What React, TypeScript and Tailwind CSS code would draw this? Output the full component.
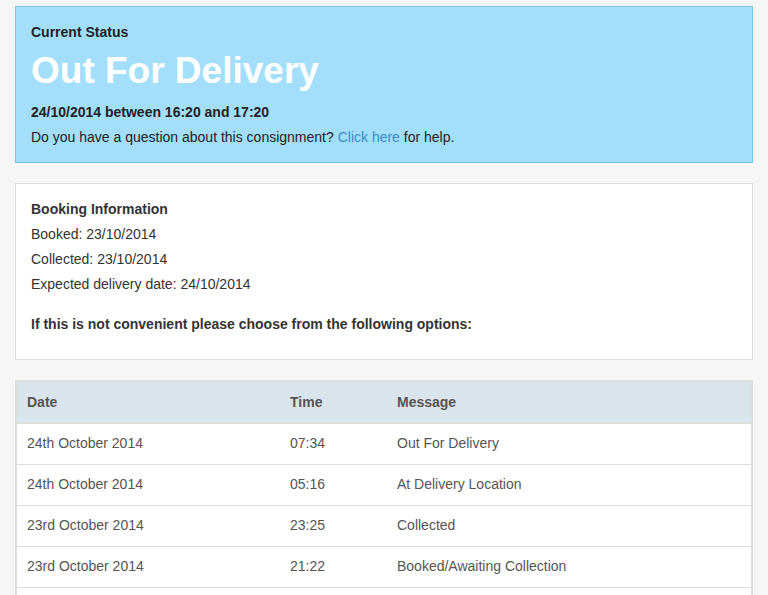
/**
 * Consignment tracking page
 * Current status banner, booking details and the tracking history table
 */

const history = [
  { date: '24th October 2014', time: '07:34', message: 'Out For Delivery' },
  { date: '24th October 2014', time: '05:16', message: 'At Delivery Location' },
  { date: '23rd October 2014', time: '23:25', message: 'Collected' },
  { date: '23rd October 2014', time: '21:22', message: 'Booked/Awaiting Collection' },
]

export default function App() {
  return (
    <div
      className="min-h-screen bg-[#f6f6f6] pl-[15px] pr-[15px] pt-[6px] text-[14px] text-[#333]"
      style={{ fontFamily: '"Liberation Sans", Arial, sans-serif' }}
    >
      <div className="w-[738px]">
        <div className="border border-[#7fc3e0] bg-[#a3dffa] pl-[15px] pr-4 pt-[15px] pb-[15px] text-[#222]">
          <p className="text-[14px] font-bold leading-[20px]">Current Status</p>
          <h1 className="mt-[9px] text-[37px] font-bold leading-[40px] text-white">Out For Delivery</h1>
          <p className="mt-[11px] text-[14px] font-bold leading-[20px]">24/10/2014 between 16:20 and 17:20</p>
          <p className="mt-[5px] text-[14px] leading-[20px]">
            Do you have a question about this consignment?{' '}
            <a href="#" className="text-[#3d8cc9]">
              Click here
            </a>{' '}
            for help.
          </p>
        </div>

        <div className="mt-5 border border-[#dcdcdc] bg-white pl-[15px] pr-4 pt-[15px] pb-[25px] text-[#333]">
          <p className="font-bold leading-[20px]">Booking Information</p>
          <p className="mt-[5px] leading-[20px]">Booked: 23/10/2014</p>
          <p className="mt-[5px] leading-[20px]">Collected: 23/10/2014</p>
          <p className="mt-[5px] leading-[20px]">Expected delivery date: 24/10/2014</p>
          <p className="mt-[20px] font-bold leading-[20px]">
            If this is not convenient please choose from the following options:
          </p>
        </div>

        <div className="mt-5 border-2 border-[#dedede] bg-white pb-10">
          <table className="w-full border-collapse text-left text-[#555]">
            <thead>
              <tr className="h-[41px] bg-[#dae4eb]">
                <th className="w-[262px] pl-[10px] font-bold">Date</th>
                <th className="w-[107px] pl-[11px] font-bold">Time</th>
                <th className="pl-[11px] font-bold">Message</th>
              </tr>
            </thead>
            <tbody>
              {history.map((row, i) => (
                <tr key={i} className="h-[41px] border-y border-[#dcdcdc]">
                  <td className="pl-[10px]">{row.date}</td>
                  <td className="pl-[11px]">{row.time}</td>
                  <td className="pl-[11px]">{row.message}</td>
                </tr>
              ))}
            </tbody>
          </table>
        </div>
      </div>
    </div>
  )
}
